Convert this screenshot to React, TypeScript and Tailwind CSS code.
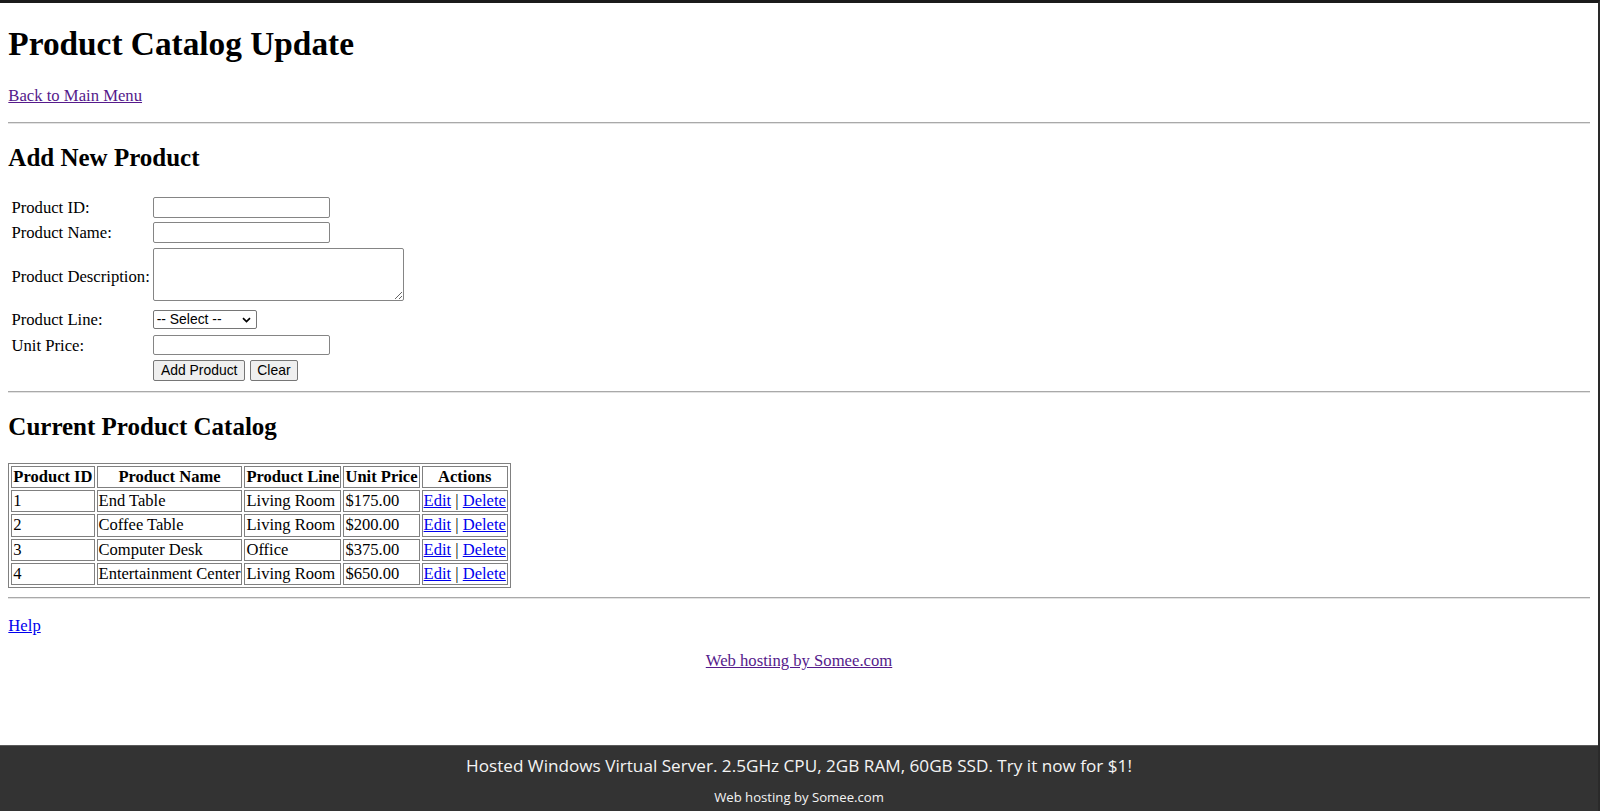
import React from 'react';

type Product = { id: number; name: string; line: string; price: string };

const products: Product[] = [
  { id: 1, name: 'End Table', line: 'Living Room', price: '$175.00' },
  { id: 2, name: 'Coffee Table', line: 'Living Room', price: '$200.00' },
  { id: 3, name: 'Computer Desk', line: 'Office', price: '$375.00' },
  { id: 4, name: 'Entertainment Center', line: 'Living Room', price: '$650.00' },
];

const inputCls =
  "h-[20.8px] w-[176.5px] rounded-[2px] border border-[#858585] bg-white px-[2px] font-['Liberation_Sans',Arial,sans-serif] text-[13.9px]";
const buttonCls =
  "h-[20.8px] rounded-[2px] border border-[#767676] bg-[#efefef] font-['Liberation_Sans',Arial,sans-serif] text-[13.9px] leading-none text-black";
const cellCls = 'border border-[#808080] p-[1.04px] whitespace-nowrap';

function Rule() {
  return <hr className="h-0 border-x-0 border-t border-b border-t-[#a9a9a9] border-b-[#e3e3e3]" />;
}

function FormRow({ label, rowCls, children }: { label: string; rowCls: string; children: React.ReactNode }) {
  return (
    <div className={`flex items-center ${rowCls}`}>
      <label className="w-[141.8px] shrink-0 leading-[19.17px]">{label}</label>
      {children}
    </div>
  );
}

export default function App() {
  return (
    <div className="flex h-[811px] flex-col border-t-[3px] border-r-2 border-t-[#1b1b1b] border-r-[#2a2a2a] bg-white font-['Liberation_Serif','Times_New_Roman',serif] text-[16.67px] text-black">
      <main className="flex-1 px-[8.33px]">
        <h1 className="mt-[22.33px] text-[33.33px] font-bold leading-[38.3px]">Product Catalog Update</h1>
        <p className="mt-[22.33px] mb-[16.67px] leading-[19.17px]">
          <a href="#" className="text-[#551a8b] underline">Back to Main Menu</a>
        </p>
        <Rule />

        <h2 className="mt-[20.5px] mb-[21px] text-[25px] font-bold leading-[28.75px]">Add New Product</h2>
        <form className="flex flex-col gap-[4.6px] pt-[3px] pb-[2px] pl-[3.12px]" onSubmit={(e) => e.preventDefault()}>
          <FormRow label="Product ID:" rowCls="h-[20.8px]">
            <input type="text" className={inputCls} />
          </FormRow>
          <FormRow label="Product Name:" rowCls="h-[20.8px]">
            <input type="text" className={inputCls} />
          </FormRow>
          <FormRow label="Product Description:" rowCls="h-[56.9px]">
            <div className="h-[56.9px]">
              <textarea className="block h-[52.7px] w-[250.7px] resize rounded-[2px] border border-[#858585] bg-white" />
            </div>
          </FormRow>
          <FormRow label="Product Line:" rowCls="h-[20.8px]">
            <div className="flex h-[18.8px] w-[103.4px] items-center justify-between rounded-[2px] border border-[#767676] bg-white pl-[2.5px] pr-[4px] font-['Liberation_Sans',Arial,sans-serif] text-[13.9px]">
              <span>-- Select --</span>
              <svg width="9" height="6" viewBox="0 0 9 6" className="mr-[1px]">
                <path d="M1 1.2 L4.5 4.6 L8 1.2" fill="none" stroke="#000" strokeWidth="1.7" />
              </svg>
            </div>
          </FormRow>
          <FormRow label="Unit Price:" rowCls="h-[20.8px]">
            <input type="text" className={inputCls} />
          </FormRow>
          <div className="flex h-[20.8px] items-center gap-[4.7px] pl-[141.8px]">
            <button type="submit" className={`${buttonCls} w-[92px]`}>Add Product</button>
            <button type="reset" className={`${buttonCls} w-[48px]`}>Clear</button>
          </div>
        </form>
        <div className="mt-[8.5px]">
          <Rule />
        </div>

        <h2 className="mt-[20px] mb-[20.5px] text-[25px] font-bold leading-[28.75px]">Current Product Catalog</h2>
        <table className="border-separate border-spacing-[2.08px] border border-[#808080] text-[16.55px] leading-[18.3px]">
          <thead>
            <tr>
              {['Product ID', 'Product Name', 'Product Line', 'Unit Price', 'Actions'].map((h) => (
                <th key={h} className={`${cellCls} text-center font-bold`}>
                  {h}
                </th>
              ))}
            </tr>
          </thead>
          <tbody>
            {products.map((p) => (
              <tr key={p.id}>
                <td className={cellCls}>{p.id}</td>
                <td className={cellCls}>{p.name}</td>
                <td className={cellCls}>{p.line}</td>
                <td className={cellCls}>{p.price}</td>
                <td className={cellCls}>
                  <a href="#" className="text-[#0000ee] underline">Edit</a> | <a href="#" className="text-[#0000ee] underline">Delete</a>
                </td>
              </tr>
            ))}
          </tbody>
        </table>
        <div className="mt-[8.5px]">
          <Rule />
        </div>
        <p className="mt-[16.67px] leading-[19.17px]">
          <a href="#" className="text-[#0000ee] underline">Help</a>
        </p>
        <div className="mt-[16.67px] text-center leading-[19.17px]">
          <a href="#" className="text-[#551a8b] underline">Web hosting by Somee.com</a>
        </div>
      </main>

      <footer className="flex h-[66px] flex-col items-center border-t border-[#5a5a5a] bg-[#333333] font-['Open_Sans',sans-serif] text-[#f4f4f4]">
        <div className="mt-[9px] text-[17.15px] leading-[22px]">
          Hosted Windows Virtual Server. 2.5GHz CPU, 2GB RAM, 60GB SSD. Try it now for $1!
        </div>
        <div className="mt-[11px] text-[13.15px] leading-[18px]">Web hosting by Somee.com</div>
      </footer>
    </div>
  );
}
